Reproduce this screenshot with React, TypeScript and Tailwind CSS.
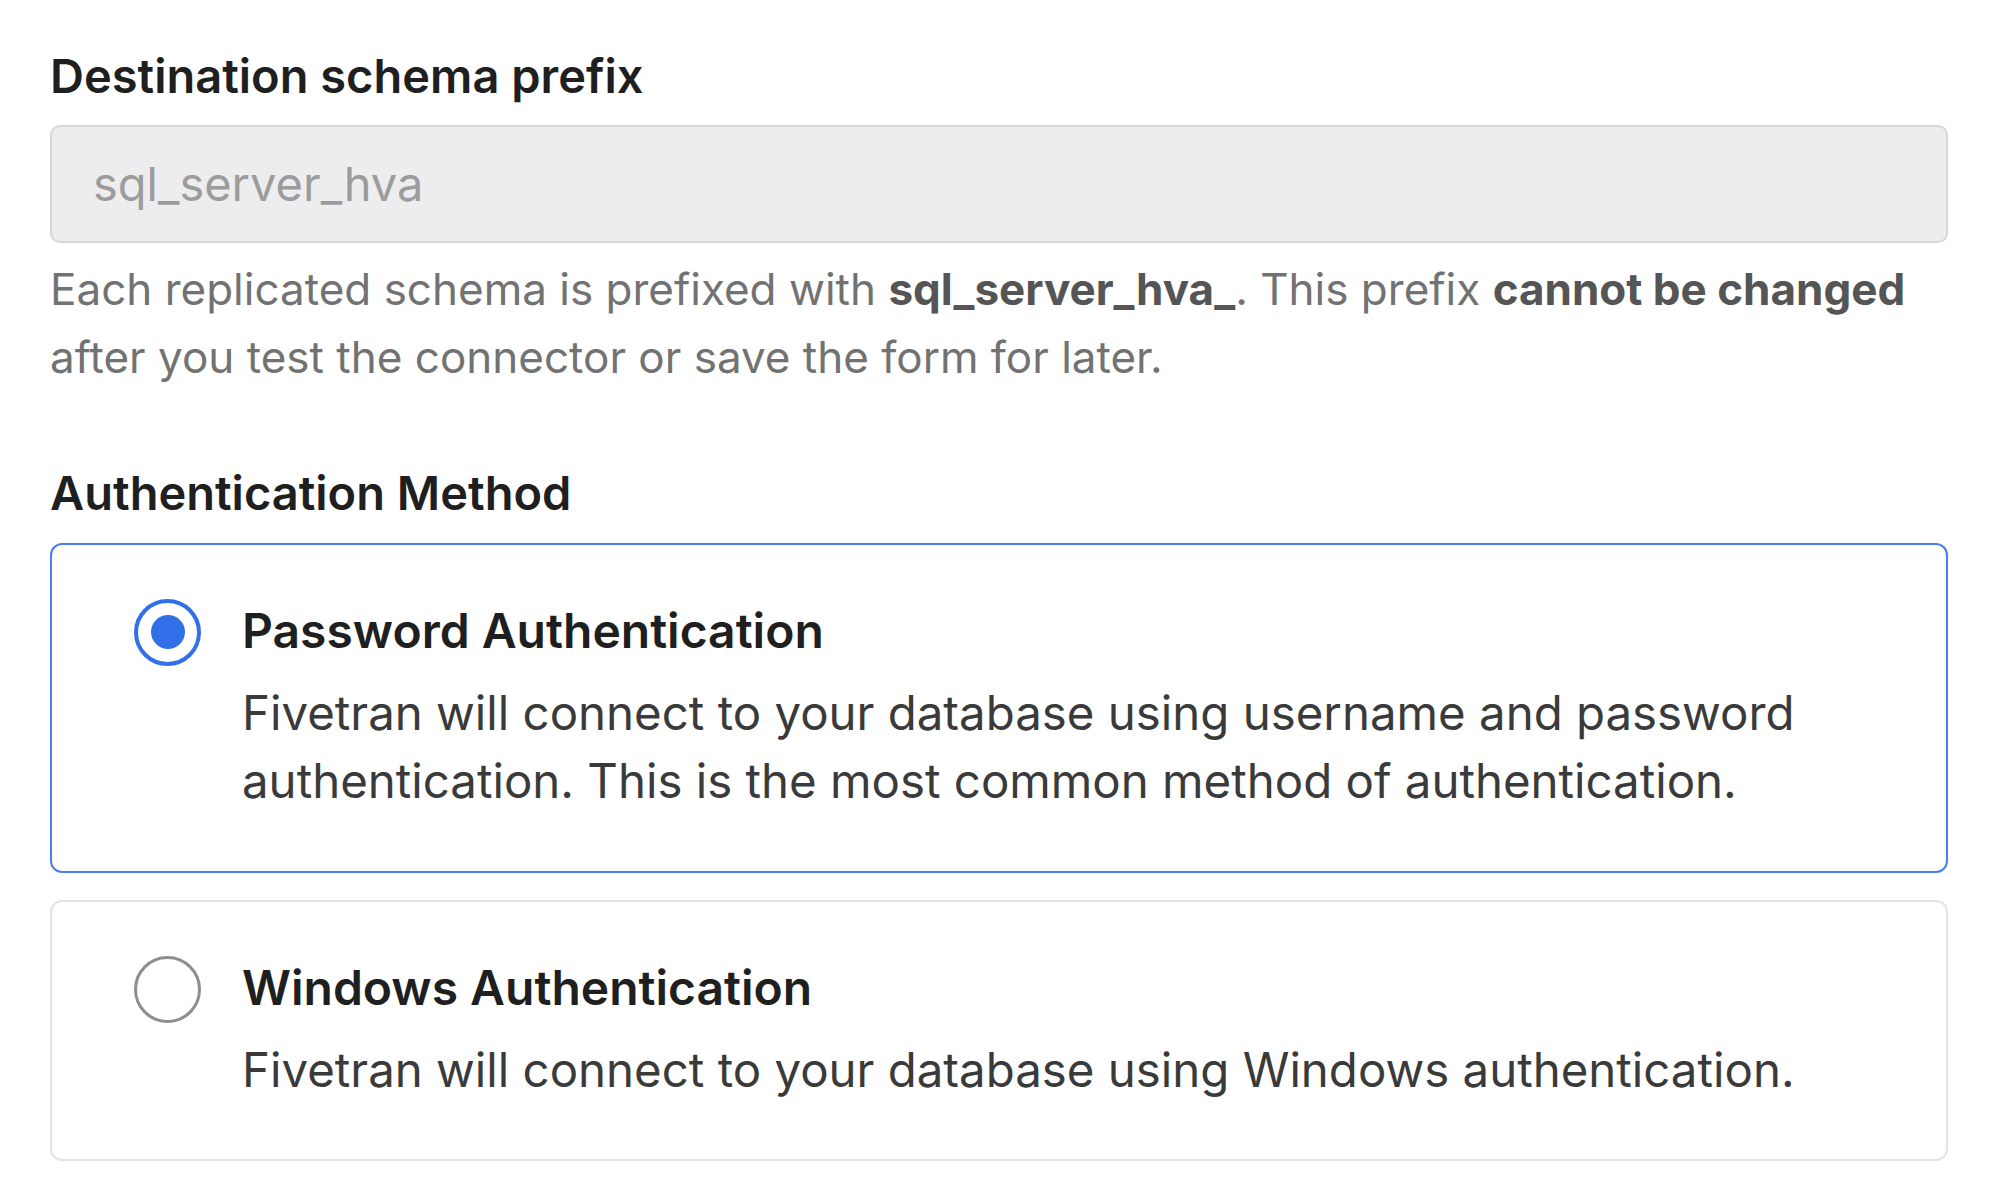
import React, { useState } from 'react';

type Method = 'password' | 'windows';

const options: { id: Method; title: string; desc: string }[] = [
  {
    id: 'password',
    title: 'Password Authentication',
    desc: 'Fivetran will connect to your database using username and password authentication. This is the most common method of authentication.',
  },
  {
    id: 'windows',
    title: 'Windows Authentication',
    desc: 'Fivetran will connect to your database using Windows authentication.',
  },
];

const Radio: React.FC<{ checked: boolean }> = ({ checked }) => (
  <span
    className={
      checked
        ? 'flex items-center justify-center w-[67px] h-[67px] rounded-full border-[4px] border-[#3170e8] bg-white shrink-0'
        : 'flex items-center justify-center w-[67px] h-[67px] rounded-full border-[3px] border-[#8e8e8e] bg-white shrink-0'
    }
  >
    {checked && <span className="block w-[34px] h-[34px] rounded-full bg-[#3170e8]" />}
  </span>
);

export default function App() {
  const [method, setMethod] = useState<Method>('password');

  return (
    <div
      className="min-h-screen bg-white pl-[50px] pr-[52px] pt-[48px] text-[#222222]"
      style={{ fontFamily: 'Inter, "Noto Sans", sans-serif' }}
    >
      <h2 className="text-[47px] leading-[56px] font-semibold text-[#1f1f1f]">Destination schema prefix</h2>

      <div className="mt-[21px] h-[118px] flex items-center px-[41px] rounded-[10px] border-2 border-[#d6d7db] bg-[#ededf0]">
        <span className="text-[47px] text-[#9c9c9c]">sql_server_hva</span>
      </div>

      <p className="mt-[12px] text-[44px] leading-[68px] text-[#727272]">
        Each replicated schema is prefixed with <b className="font-bold text-[#555555]">sql_server_hva_</b>. This prefix{' '}
        <b className="font-bold text-[#555555]">cannot be changed</b> after you test the connector or save the form for later.
      </p>

      <h2 className="mt-[74px] text-[47px] leading-[56px] font-semibold text-[#1f1f1f]">Authentication Method</h2>

      <div className="mt-[22px] flex flex-col gap-[27px]">
        {options.map((o) => {
          const checked = method === o.id;
          return (
            <button
              key={o.id}
              type="button"
              onClick={() => setMethod(o.id)}
              className={
                checked
                  ? 'text-left rounded-[12px] border-2 border-[#4a7fea] bg-white pl-[82px] pr-[60px] pt-[58px] pb-[56px] flex gap-[41px]'
                  : 'text-left rounded-[12px] border-2 border-[#e4e4e7] bg-white pl-[82px] pr-[60px] pt-[58px] pb-[55px] flex gap-[41px]'
              }
            >
              <div className="h-[58px] flex items-center">
                <Radio checked={checked} />
              </div>
              <div className="flex-1">
                <div className="text-[48px] leading-[56px] font-semibold text-[#1f1f1f]">{o.title}</div>
                <div className="mt-[20px] text-[47.4px] leading-[68px] text-[#3a3a3a]">{o.desc}</div>
              </div>
            </button>
          );
        })}
      </div>
    </div>
  );
}
